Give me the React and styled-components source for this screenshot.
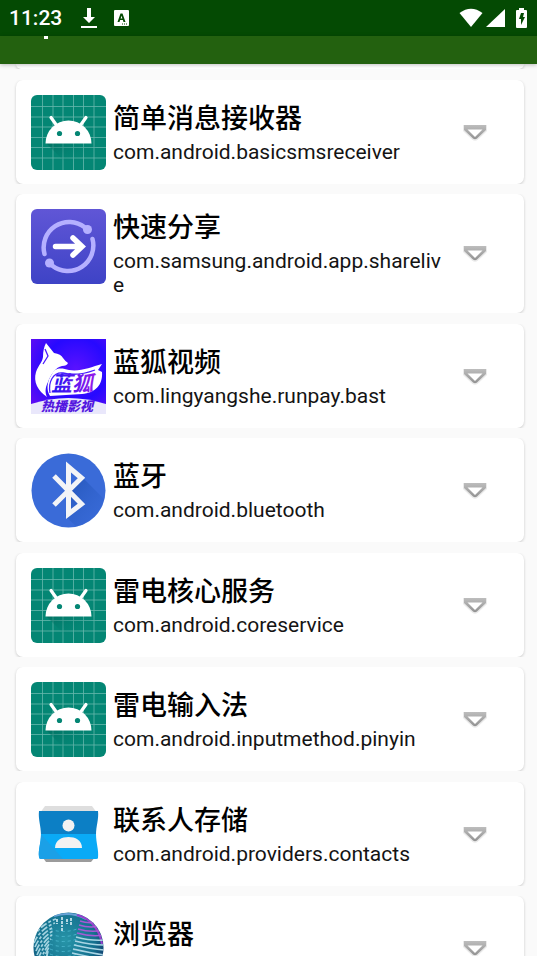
import React from "react";
import styled, { createGlobalStyle } from "styled-components";

const GlobalStyle = createGlobalStyle`
  * { box-sizing: border-box; }
  body { margin: 0; background: #fafafa; }
`;

const Screen = styled.div`
  display: flex;
  flex-direction: column;
  height: 100vh;
  overflow: hidden;
  background: #fafafa;
  color: #000;
  font-family: Roboto, "Noto Sans CJK SC", sans-serif;
`;

const StatusBar = styled.header`
  display: flex;
  flex: none;
  align-items: center;
  justify-content: space-between;
  height: 36px;
  padding: 0 9px;
  background: #044a03;
  color: #fff;
`;

const StatusGroup = styled.div`
  display: flex;
  align-items: center;
  gap: ${(p) => p.$gap}px;
`;

const Clock = styled.time`
  margin-right: 2px;
  font-size: 21px;
  font-weight: 500;
  line-height: 36px;
`;

const StatusIcon = styled.svg`
  display: block;
  flex: none;
`;

const Toolbar = styled.div`
  flex: none;
  height: 28px;
  padding-left: 44px;
  background: #23610f;
  box-shadow: 0 1px 4px rgba(0, 0, 0, 0.25);
  z-index: 1;
`;

const TitleTail = styled.div`
  width: 4px;
  height: 3px;
  background: #fff;
`;

const List = styled.ul`
  flex: 1;
  min-height: 0;
  margin: 0;
  padding: 0 13px 0 16px;
  overflow-y: auto;
  scrollbar-width: none;
  list-style: none;
`;

const Card = styled.li`
  display: flex;
  align-items: center;
  margin-bottom: 10px;
  padding: 15px 37px 14px 15px;
  border-radius: 7px;
  background: #fff;
  box-shadow: 0 1px 3px rgba(0, 0, 0, 0.2);
  clip-path: inset(0 -4px);

  &:nth-child(odd) {
    margin-bottom: 11px;
  }
`;

const CardEnd = styled(Card)`
  height: 5px;
  padding: 0;
  border-radius: 0 0 7px 7px;
`;

const AppIcon = styled.svg`
  display: block;
  flex: none;
  align-self: flex-start;
  width: 75px;
  height: 75px;
  margin-right: 7px;
`;

const Info = styled.div`
  flex: 1;
  min-width: 0;
  min-height: 66px;
  padding-bottom: 2px;
`;

const Name = styled.h2`
  margin: 0 0 2px;
  font-size: 27px;
  font-weight: 500;
  line-height: 38px;
`;

const PackageName = styled.p`
  margin: 0;
  color: #141414;
  font-size: 21px;
  line-height: 24px;
  word-break: break-all;
`;

const MoreButton = styled.button`
  display: block;
  flex: none;
  width: 24px;
  height: 24px;
  margin-left: 16px;
  padding: 0;
  border: 0;
  background: none;
  cursor: pointer;
`;

function AndroidIcon() {
  const lines = [11.5, 22, 32, 42.5, 52.5, 63];
  return (
    <AppIcon viewBox="0 0 75 75" aria-hidden="true">
      <defs>
        <linearGradient id="robotShade" x1="0" y1="0" x2="1" y2="1">
          <stop offset="0" stopColor="#005f52" stopOpacity="0.6" />
          <stop offset="0.6" stopColor="#008577" stopOpacity="0" />
        </linearGradient>
      </defs>
      <rect width="75" height="75" rx="6" fill="#048674" />
      <g stroke="#67b8ac" strokeWidth="0.8">
        {lines.map((n) => (
          <path key={n} d={`M${n} 0V75M0 ${n}H75`} />
        ))}
      </g>
      <path d="M15 48 42 75H75V62L59 46Z" fill="url(#robotShade)" />
      <path d="M14.500 48.500a23 23 0 0 1 46 0z" fill="#fff" />
      <path d="m20 22.500 5 7m30-7-5 7" stroke="#fff" strokeWidth="3.200" strokeLinecap="round" />
      <circle cx="28.500" cy="38.500" r="2.600" fill="#048674" />
      <circle cx="46.500" cy="38.500" r="2.600" fill="#048674" />
    </AppIcon>
  );
}

function ShareIcon() {
  return (
    <AppIcon viewBox="0 0 75 75" aria-hidden="true">
      <defs>
        <linearGradient id="shareBg" x1="0.500" y1="0" x2="0.500" y2="1">
          <stop offset="0" stopColor="#6056d6" />
          <stop offset="1" stopColor="#3e43c6" />
        </linearGradient>
      </defs>
      <rect width="75" height="75" rx="6" fill="url(#shareBg)" />
      <g fill="none" stroke="#b5b0ff" strokeWidth="4.500" strokeLinecap="round">
        <path d="M13.500 45A25.500 25.500 0 0 1 54 18.500" />
        <path d="M61.500 30A25.500 25.500 0 0 1 21 56.500" />
      </g>
      <circle cx="56.500" cy="20.500" r="4.500" fill="#b5b0ff" />
      <circle cx="18.500" cy="54" r="4.500" fill="#b5b0ff" />
      <path d="M24.500 37.500H49M42 29l9 8.500-9 8.500" fill="none" stroke="#fff" strokeWidth="5.500" strokeLinecap="round" />
    </AppIcon>
  );
}

function FoxIcon() {
  return (
    <AppIcon viewBox="0 0 75 75" role="img" aria-label="蓝狐">
      <defs>
        <radialGradient id="foxBg" cx="0.600" cy="0.400" r="0.700">
          <stop offset="0" stopColor="#5a12ff" />
          <stop offset="0.600" stopColor="#2709ff" />
          <stop offset="1" stopColor="#5a0cf4" />
        </radialGradient>
        <linearGradient id="foxText" x1="0" y1="0" x2="1" y2="0">
          <stop offset="0" stopColor="#2112f4" />
          <stop offset="1" stopColor="#9a1bea" />
        </linearGradient>
      </defs>
      <rect width="75" height="75" fill="url(#foxBg)" />
      <path d="M0 65Q37 53 75 65V75H0Z" fill="#e9e7fb" />
      <path
        d="M15 4 23 14Q30 15 32 19Q34 22 37 24Q36 27 31 27C25 28 20 35 17 43C14 49 14 54 16 58C7 52 2 43 5 33C8 25 11 24 12 18C12 12 13 8 15 4Z"
        fill="#fff"
      />
      <path d="M14 10 17 17 12 25" fill="none" stroke="#4a19ff" strokeWidth="1.300" />
      <path d="M21 35C24 28 31 29 38 31C49 33 60 28 71 25L67 31 71 33C72 46 64 54 51 55L19 57C15 51 16 42 21 35Z" fill="#fff" />
      <path d="M19 54C17 43 22 33 32 34C44 37 56 34 64 31" fill="none" stroke="#471cff" strokeWidth="1.300" />
      <text x="20" y="52" fill="url(#foxText)" fontFamily="Noto Sans CJK SC, sans-serif" fontSize="21" fontWeight="700" fontStyle="italic">蓝狐</text>
      <text x="10" y="72" fill="#5418e0" fontFamily="Noto Sans CJK SC, sans-serif" fontSize="13" fontWeight="900" fontStyle="italic">热播影视</text>
    </AppIcon>
  );
}

function BluetoothIcon() {
  return (
    <AppIcon viewBox="0 0 75 75" aria-hidden="true">
      <defs>
        <clipPath id="btClip"><circle cx="37.500" cy="37.500" r="37" /></clipPath>
        <linearGradient id="btShade" x1="0" y1="0" x2="1" y2="1">
          <stop offset="0" stopColor="#1e4fae" stopOpacity="0.800" />
          <stop offset="1" stopColor="#3367d6" stopOpacity="0.100" />
        </linearGradient>
      </defs>
      <circle cx="37.500" cy="37.500" r="37" fill="#3a6bd8" />
      <path d="M51 24 75 48V75H47L34 63 38 40Z" fill="url(#btShade)" clipPath="url(#btClip)" />
      <path d="M23 23 50.500 51 37.500 61V14L50.500 25 23 52" fill="none" stroke="#f3f4f7" strokeWidth="5" />
    </AppIcon>
  );
}

function ContactsIcon() {
  return (
    <AppIcon viewBox="0 0 75 75" aria-hidden="true">
      <path d="M14 9H61L66 16H9Z" fill="#dedede" />
      <path d="M10 58H66L60 65H15Z" fill="#9b9b9b" />
      <path d="M8 14H67C68 22 65 29 65 38H10C10 29 7 22 8 14Z" fill="#0c7fc5" />
      <path d="M10 37H65C65 46 68 53 67 61Q67 62 65 62H10Q8 62 8 60C7 53 10 46 10 37Z" fill="#0aaaf6" />
      <path d="M10 37 32 62H10Q8 62 8 60C7 53 10 46 10 37Z" fill="#1ba0e7" />
      <circle cx="37.500" cy="28.500" r="6" fill="#f2f2f2" />
      <path d="M24 51C24 43 31 40 37.500 40S51 43 51 51Z" fill="#f2f2f2" />
    </AppIcon>
  );
}

function BrowserIcon() {
  const bands = [0, 1, 2, 3, 4, 5, 6, 7, 8, 9];
  return (
    <AppIcon viewBox="0 0 75 75" aria-hidden="true">
      <defs>
        <radialGradient id="globeBg" cx="0.450" cy="0.400" r="0.600">
          <stop offset="0" stopColor="#2795a8" />
          <stop offset="0.700" stopColor="#15718f" />
          <stop offset="1" stopColor="#12406f" />
        </radialGradient>
        <clipPath id="globeClip"><circle cx="37.500" cy="36.500" r="35" /></clipPath>
      </defs>
      <circle cx="37.500" cy="36.500" r="35" fill="url(#globeBg)" />
      <g clipPath="url(#globeClip)" fill="none">
        <path d="M23 5Q40 0 55 8" stroke="#68a2d6" strokeWidth="2" />
        <path d="M46 4C60 7 69 20 71 33" stroke="#9840cd" strokeWidth="2" />
        {bands.map((n) => (
          <g key={n}>
            <path
              d={`M${49 - n} ${10 + n * 4}Q${60} ${14 + n * 4} 73 ${9 + n * 5}`}
              stroke={n < 4 ? "#a65ad4" : "#a9d5e4"}
              strokeWidth="1.500"
            />
            <path
              d={`M${2 + n} ${28 + n * 4}Q${8 + n} ${14 + n * 4} ${25 - n} ${8 + n * 4}`}
              stroke="#a4d3e0"
              strokeWidth="1.700"
              strokeDasharray="7 2 3 2"
            />
            <path
              d={`M19 ${18 + n * 5}Q32 ${23 + n * 5} 46 ${18 + n * 5}`}
              stroke="#4bb5cd"
              strokeWidth="0.900"
              strokeDasharray="3 3"
            />
          </g>
        ))}
        <path d="M26 8v5m5-7v10m5-8v5m4-6v7m-9 6v-4" stroke="#b2d7e2" strokeWidth="2" strokeDasharray="3 1" />
      </g>
    </AppIcon>
  );
}

function TriangleIcon() {
  return (
    <svg width="24" height="24" viewBox="0 0 24 24" aria-hidden="true">
      <defs>
        <linearGradient id="triangleEdge" x1="0" y1="0" x2="0" y2="1">
          <stop offset="0" stopColor="#bdbdbd" />
          <stop offset="1" stopColor="#929292" />
        </linearGradient>
      </defs>
      <path d="M0 4H24V10L15 18.500Q12 21 9 18.500L0 10Z" fill="#d0d0d0" opacity="0.450" />
      <path d="M1 4H23V9L14 17.500Q12 19 10 17.500L1 9Z" fill="url(#triangleEdge)" />
      <path d="M4.500 8.500H19.500L12 16Z" fill="#fff" />
    </svg>
  );
}

const apps = [
  { name: "简单消息接收器", pkg: "com.android.basicsmsreceiver", Icon: AndroidIcon },
  { name: "快速分享", pkg: "com.samsung.android.app.sharelive", Icon: ShareIcon },
  { name: "蓝狐视频", pkg: "com.lingyangshe.runpay.bast", Icon: FoxIcon },
  { name: "蓝牙", pkg: "com.android.bluetooth", Icon: BluetoothIcon },
  { name: "雷电核心服务", pkg: "com.android.coreservice", Icon: AndroidIcon },
  { name: "雷电输入法", pkg: "com.android.inputmethod.pinyin", Icon: AndroidIcon },
  { name: "联系人存储", pkg: "com.android.providers.contacts", Icon: ContactsIcon },
  { name: "浏览器", Icon: BrowserIcon },
];

function AppCard({ name, pkg, Icon }) {
  return (
    <Card>
      <Icon />
      <Info>
        <Name>{name}</Name>
        {pkg && <PackageName>{pkg}</PackageName>}
      </Info>
      <MoreButton type="button" aria-label={name}>
        <TriangleIcon />
      </MoreButton>
    </Card>
  );
}

export default function App() {
  return (
    <Screen>
      <GlobalStyle />
      <StatusBar>
        <StatusGroup $gap={17}>
          <Clock>11:23</Clock>
          <StatusIcon width="16" height="22" viewBox="0 0 16 22" aria-hidden="true">
            <path d="M6 1h4v9h4l-6 6-6-6h4zM0 19h16v2H0z" fill="#fff" />
          </StatusIcon>
          <StatusIcon width="15" height="16" viewBox="0 0 15 16" aria-hidden="true">
            <rect width="15" height="16" rx="1" fill="#fff" />
            <path
              d="M3.500 12 6.500 3.500h2L11.500 12h-2l-.6-2H6.100l-.6 2zM6.600 8.500h1.800L7.500 5.700z"
              fill="#044a03"
              fillRule="evenodd"
            />
            <path d="M8 14h6" stroke="#044a03" strokeWidth="1" strokeDasharray="1 1" />
          </StatusIcon>
        </StatusGroup>
        <StatusGroup $gap={3}>
          <StatusIcon width="24" height="20" viewBox="0 0 24 20" aria-hidden="true">
            <path d="M0.500 5Q12-3.500 23.500 5L12 19Z" fill="#fff" />
          </StatusIcon>
          <StatusIcon width="19" height="20" viewBox="0 0 19 20" aria-hidden="true">
            <path d="M19 1v18H0z" fill="#fff" />
          </StatusIcon>
          <StatusIcon width="20" height="20" viewBox="0 0 20 20" aria-hidden="true">
            <path d="M11 0h5v2h2q1 0 1 1v16q0 1-1 1h-9q-1 0-1-1V3q0-1 1-1h2z" fill="#fff" />
            <path d="M13 5h3l-1 4h2l-4 8v-6h-2z" fill="#044a03" />
          </StatusIcon>
        </StatusGroup>
      </StatusBar>
      <Toolbar>
        <TitleTail />
      </Toolbar>
      <List>
        <CardEnd aria-hidden="true" />
        {apps.map((app) => (
          <AppCard key={app.name} {...app} />
        ))}
      </List>
    </Screen>
  );
}
